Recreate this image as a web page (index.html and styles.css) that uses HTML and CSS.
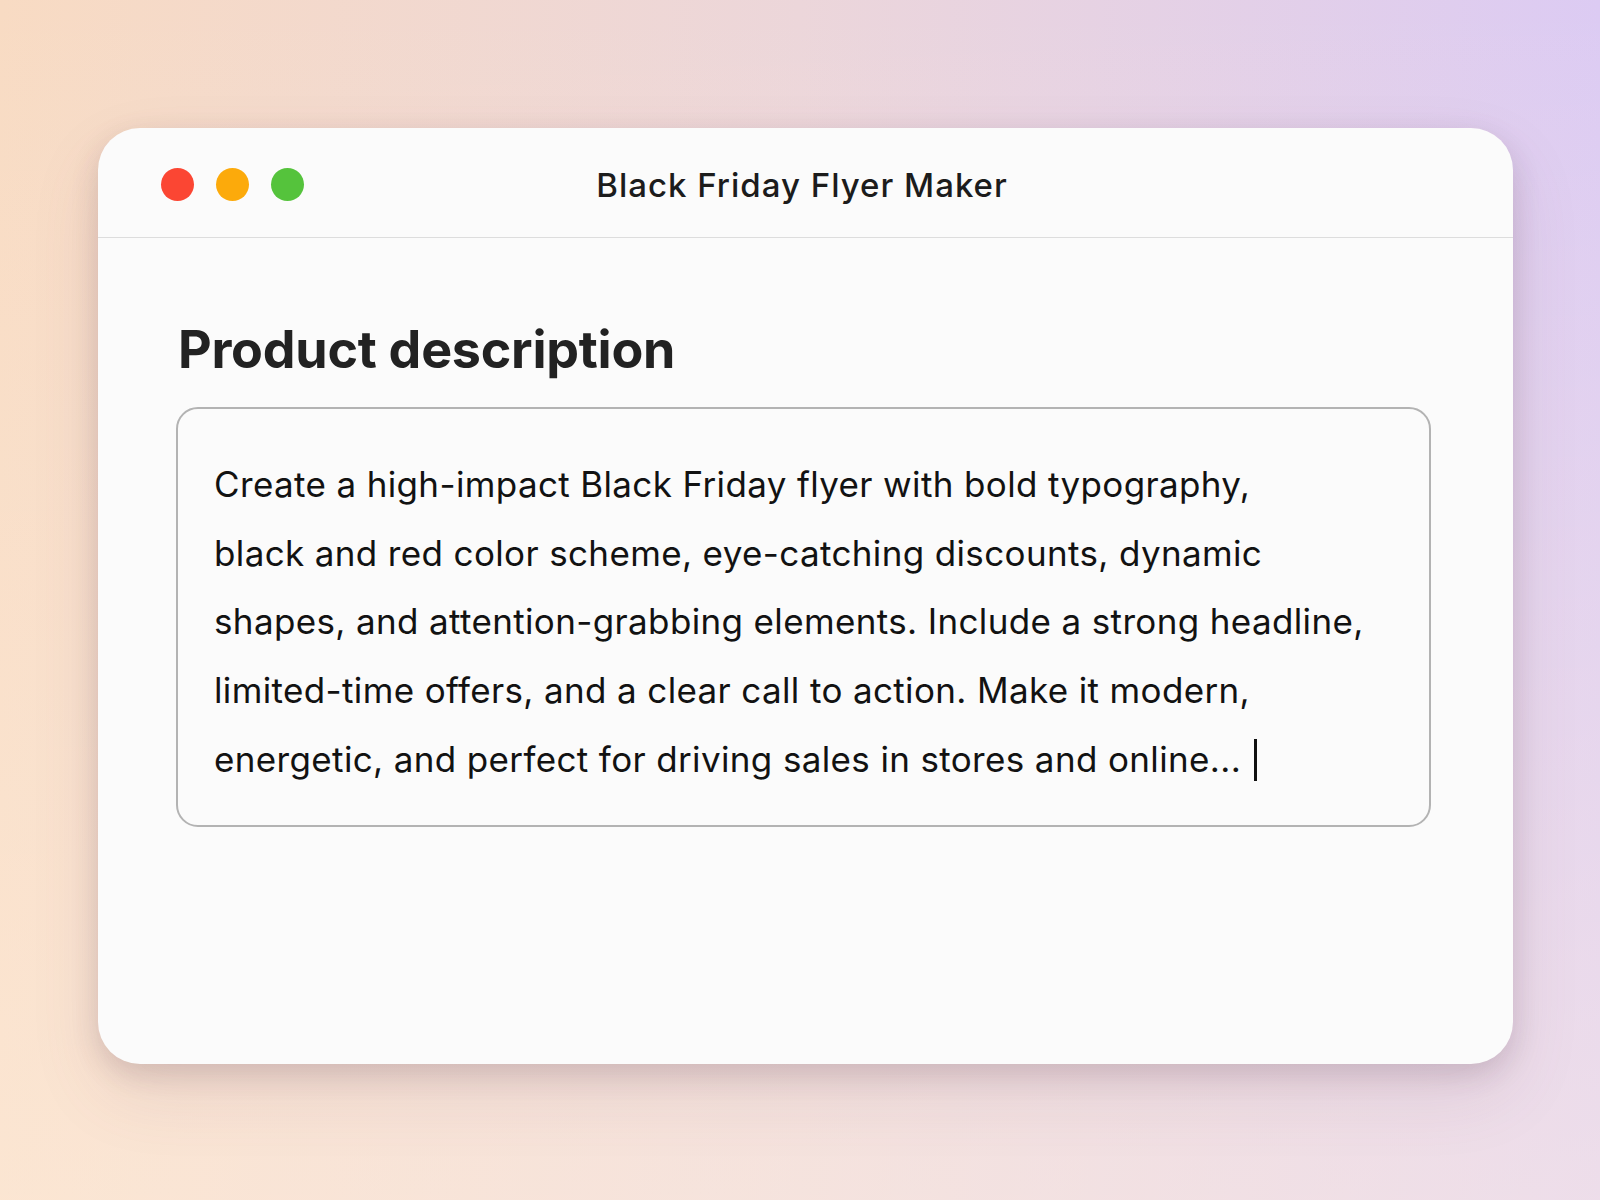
FILE: index.html
```html
<!DOCTYPE html>
<html lang="en">
<head>
<meta charset="utf-8">
<title>Black Friday Flyer Maker</title>
<link rel="stylesheet" href="styles.css">
</head>
<body>
  <div class="window">
    <header class="titlebar">
      <div class="lights">
        <span class="light red"></span>
        <span class="light yellow"></span>
        <span class="light green"></span>
      </div>
      <div class="title">Black Friday Flyer Maker</div>
      <div class="spacer"></div>
    </header>
    <main class="content">
      <h1 class="heading">Product description</h1>
      <div class="textbox">
        <span class="line">Create a high-impact Black Friday flyer with bold typography,</span>
        <span class="line">black and red color scheme, eye-catching discounts, dynamic</span>
        <span class="line">shapes, and attention-grabbing elements. Include a strong headline,</span>
        <span class="line">limited-time offers, and a clear call to action. Make it modern,</span>
        <span class="line">energetic, and perfect for driving sales in stores and online... <span class="cursor"></span></span>
      </div>
    </main>
  </div>
</body>
</html>
```

FILE: styles.css
```css
html, body {
  margin: 0;
  padding: 0;
}

body {
  width: 1600px;
  height: 1200px;
  box-sizing: border-box;
  padding: 128px 0 0 98px;
  font-family: "Inter", "Noto Sans", "Liberation Sans", sans-serif;
  background:
    linear-gradient(180deg, rgba(255, 240, 225, 0) 0%, rgba(255, 240, 225, 0.5) 100%),
    linear-gradient(90deg, #f8dbc3 0%, #ecd6da 50%, #dccbf3 100%);
  overflow: hidden;
}

.window {
  width: 1415px;
  height: 936px;
  background: #fbfbfb;
  border-radius: 42px;
  box-shadow: 0 10px 28px rgba(70, 40, 60, 0.16), 0 30px 70px rgba(120, 80, 110, 0.12);
  display: flex;
  flex-direction: column;
  overflow: hidden;
}

.titlebar {
  height: 110px;
  box-sizing: border-box;
  padding: 4px 0 0 63px;
  border-bottom: 1px solid #dddddd;
  display: grid;
  grid-template-columns: 1fr auto 1fr;
  align-items: center;
}

.lights {
  display: flex;
  gap: 22px;
}

.light {
  width: 33px;
  height: 33px;
  border-radius: 50%;
  display: block;
}

.red { background: #fb4633; }
.yellow { background: #fcaa0b; }
.green { background: #55c33c; }

.title {
  font-size: 33px;
  font-weight: 500;
  color: #1c1c1c;
  padding-right: 70px;
  letter-spacing: 1px;
}

.content {
  padding: 81px 82px 0 78px;
  display: flex;
  flex-direction: column;
  gap: 26px;
}

.heading {
  margin: 0 0 0 2px;
  font-size: 52px;
  line-height: 62px;
  font-weight: 700;
  color: #222222;
  letter-spacing: -0.25px;
}

.textbox {
  border: 2px solid #b3b3b3;
  border-radius: 22px;
  padding: 41px 34px 31px 36px;
  font-size: 35px;
  line-height: 68.7px;
  color: #121212;
  letter-spacing: 0.36px;
  display: flex;
  flex-direction: column;
}

.line {
  display: block;
  white-space: nowrap;
}

.cursor {
  display: inline-block;
  width: 3px;
  height: 42px;
  background: #111111;
  vertical-align: -9px;
  margin-left: 3px;
}
```
